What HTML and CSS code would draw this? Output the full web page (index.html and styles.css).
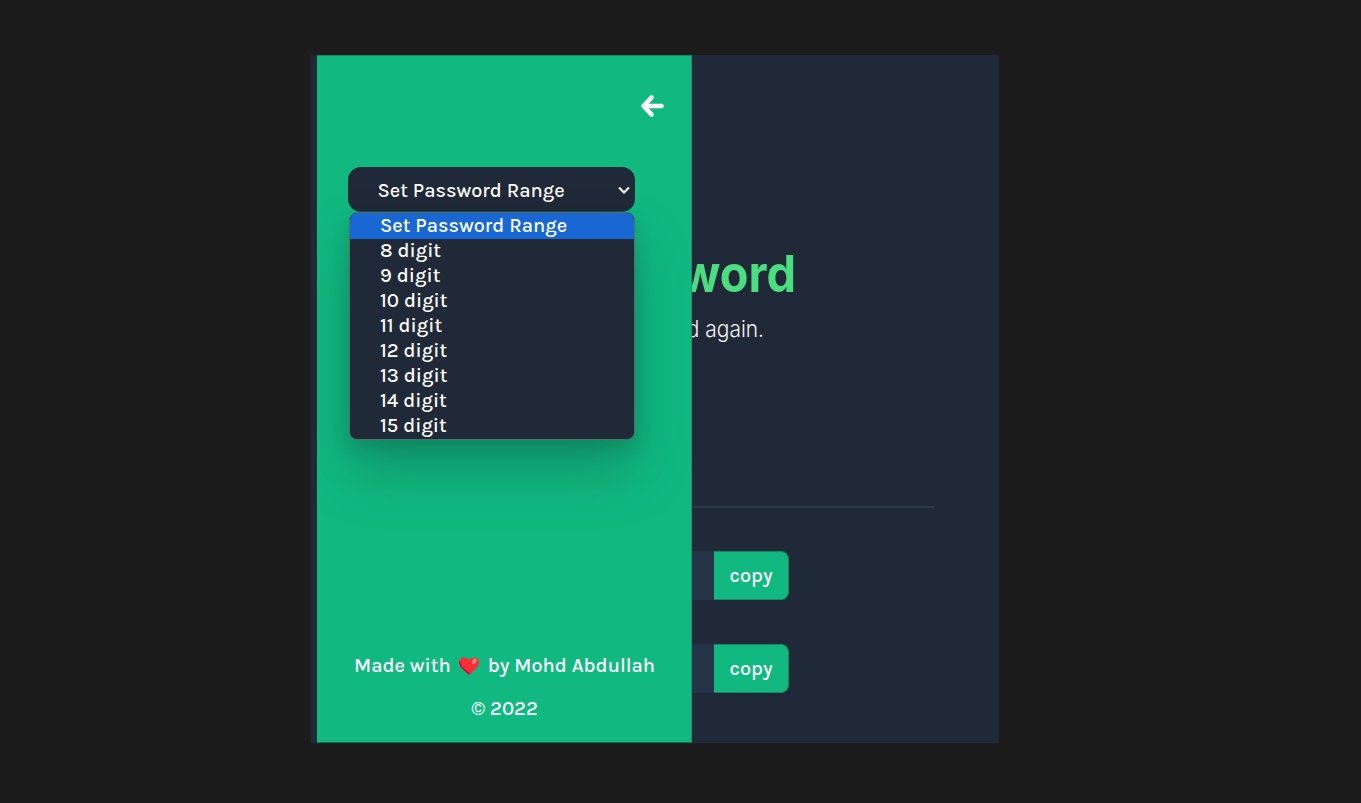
FILE: index.html
```html
<!DOCTYPE html>
<html lang="en">
<head>
<meta charset="utf-8">
<title>Password Generator</title>
<link rel="stylesheet" href="styles.css">
</head>
<body>
<div class="card">
  <aside class="drawer">
    <svg class="back" viewBox="0 0 24 24"><path d="M11.5 3.500 3.500 12l8 8.500M4.500 12H21.500" fill="none" stroke="#fff" stroke-width="4.600" stroke-linecap="round" stroke-linejoin="round"/></svg>
    <div class="select">
      <span class="range">Set Password Range</span>
      <svg class="chevron" viewBox="0 0 12 8"><path d="M1 1.500 6 6.500 11 1.500" fill="none" stroke="#fff" stroke-width="2"/></svg>
      <ul class="menu">
        <li class="active"><span class="range">Set Password Range</span></li>
        <li>8 digit</li>
        <li>9 digit</li>
        <li>10 digit</li>
        <li>11 digit</li>
        <li>12 digit</li>
        <li>13 digit</li>
        <li>14 digit</li>
        <li>15 digit</li>
      </ul>
    </div>
    <footer class="credits">
      <p class="made"><span class="with">Made with</span><svg class="heart" viewBox="0 0 20 18"><path d="M10 17.800C6 14 0 10.500 0 5.300 0 .4 7-1.500 10 3.300 13-1.500 20 .4 20 5.300c0 5.200-6 8.700-10 12.500z" fill="#fb2c36"/><path d="M0 5.500c.2 5 6 8.500 10 12.300l1.500-1.500C7 13 1.500 10 1.200 3.200Q0 4 0 5.500z" fill="#c90f45"/><ellipse cx="15.300" cy="4.300" rx="2" ry="3" transform="rotate(30 15.300 4.300)" fill="#ff826f"/></svg><span class="by">by Mohd Abdullah</span></p>
      <p class="year">© 2022</p>
    </footer>
  </aside>
  <main class="content">
    <h1 class="title">word</h1>
    <p class="subtitle">d again.</p>
    <div class="divider"></div>
    <div class="field"><div class="value"></div><button class="copy">copy</button></div>
    <div class="field"><div class="value"></div><button class="copy">copy</button></div>
  </main>
</div>
</body>
</html>
```
FILE: styles.css
```css
* { box-sizing: border-box; }
body {
  margin: 0;
  height: 803px;
  overflow: hidden;
  background: #1c1c1c;
  padding: 55px 0 0 311px;
  color: #fff;
  font: 500 20px/25px Karla, Roboto, sans-serif;
}
h1, p, ul { margin: 0; padding: 0; }
.card {
  display: flex;
  width: 688px;
  height: 688px;
  padding-left: 6px;
  background: #202937;
}
.drawer {
  display: flex;
  flex-direction: column;
  width: 375px;
  padding: 38px 27px 0 31px;
  overflow: hidden;
  background: #11b981;
  border-top: 1px solid #168965;
  border-bottom: 1px solid #176e55;
  border-right: 1px solid #149a70;
}
.back {
  width: 24px;
  height: 24px;
  align-self: flex-end;
}
.select {
  position: relative;
  display: flex;
  align-items: center;
  justify-content: space-between;
  width: 287px;
  height: 45px;
  margin-top: 49px;
  padding: 2px 5px 0 29.5px;
  border: 1px solid #1c4a4b;
  border-width: 0 0 1px;
  border-radius: 13px;
  background: #202937;
}
.chevron { width: 12px; height: 8px; }
.range { white-space: nowrap; }
.menu {
  position: absolute;
  top: 45px;
  left: 1px;
  width: 286px;
  height: 228px;
  border: 1px solid #50706c;
  border-radius: 8px;
  overflow: hidden;
  list-style: none;
  background: #202937;
  box-shadow: 0 32px 55px rgba(15, 55, 45, .28), 0 8px 18px rgba(15, 55, 45, .18);
}
.menu li {
  height: 25px;
  padding-left: 30px;
}
.menu .active {
  height: 26px;
  margin-bottom: -1px;
  background: #1967d2;
}
.credits {
  margin-top: 441px;
  text-align: center;
}
.made {
  display: flex;
  align-items: center;
  margin-left: 6px;
  white-space: nowrap;
}
.heart { width: 20px; height: 18px; margin: 0 9px 0 8px; }
.year { margin: 18px 3px 0 0; }
.content {
  flex: 1;
  overflow: hidden;
}
.title {
  display: flex;
  justify-content: flex-end;
  margin: 189px 203px 0 0;
  color: #4ade80;
  font: 700 51px/60px Inter, sans-serif;
  transform: scaleX(.92);
  transform-origin: right;
}
.subtitle {
  display: flex;
  justify-content: flex-end;
  margin: 10px 235px 0 0;
  color: #f3f4f6;
  font: 300 22.500px/30px Inter, sans-serif;
  transform: scaleX(.93);
  transform-origin: right;
  white-space: nowrap;
}
.divider {
  width: 242px;
  height: 2px;
  margin-top: 162px;
  background: #2b394b;
}
.field {
  display: flex;
  height: 49px;
  margin-top: 43px;
}
.field + .field { margin-top: 44px; }
.value { width: 22px; background: #263449; }
.copy {
  width: 75px;
  padding: 0;
  border: 1px solid #168965;
  border-width: 1px 1px 1px 0;
  border-radius: 0 8px 8px 0;
  background: #11b981;
  color: #fff;
  font: 500 20px/25px Karla, Roboto, sans-serif;
}
```
